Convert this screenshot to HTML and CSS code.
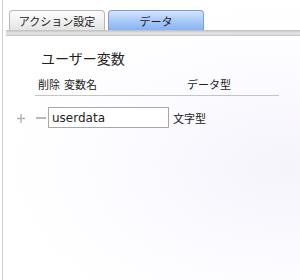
FILE: index.html
```html
<!DOCTYPE html>
<html lang="ja">
<head>
  <meta charset="UTF-8">
  <title>データ</title>
  <link rel="stylesheet" href="styles.css">
</head>
<body>
  <div class="frame">
    <div class="tabs">
      <div class="tab">アクション設定</div>
      <div class="tab active">データ</div>
    </div>
    <div class="tabbar"></div>

    <div class="panel">
      <h2 class="title">ユーザー変数</h2>
      <div class="head">
        <span class="col-del">削除</span>
        <span class="col-name">変数名</span>
        <span class="col-type">データ型</span>
      </div>
      <div class="row">
        <svg class="op" width="10" height="10" viewBox="0 0 10 10"><path d="M5 1v9M1 5.5h8" stroke="#b0b0b0" stroke-width="1.3"/></svg>
        <svg class="op minus" width="10" height="10" viewBox="0 0 10 10"><path d="M0 5h10" stroke="#a0a0a0" stroke-width="1.5"/></svg>
        <input class="name" type="text" value="userdata">
        <span class="type">文字型</span>
      </div>
    </div>
  </div>
</body>
</html>
```

FILE: styles.css
```css
body {
  margin: 0;
  font-family: "Noto Sans CJK JP", "DejaVu Sans", sans-serif;
  color: #222;
  background: #fff radial-gradient(ellipse at 95% 60%, #f6f4fb 0%, #fbfaff 35%, #fff 70%);
  height: 280px;
  overflow: hidden;
}
.frame {
  margin-left: 2px;
  height: 280px;
  border-left: 1px solid #cfcfcf;
}
.tabs {
  display: flex;
  gap: 3px;
  padding: 10px 0 0 6px;
}
.tab {
  width: 96px;
  height: 20px;
  line-height: 21px;
  text-align: center;
  font-size: 11px;
  color: #222;
  border: 1px solid #b8b8b8;
  border-bottom: none;
  border-radius: 4px 4px 0 0;
  background: linear-gradient(#fdfdfd, #e4e4e4);
  box-sizing: border-box;
}
.tab.active {
  border-color: #7a9ee0;
  background: linear-gradient(#d2e3fc, #86b3f5);
}
.tabbar {
  margin-left: 3px;
  height: 6px;
  background: linear-gradient(#bdbdbd, #e6e6e6 55%, #c8c8c8);
}
.panel {
  padding: 12px 0 0 32px;
  width: 244px;
}
.title {
  margin: 0 0 0 6px;
  font-size: 14px;
  font-weight: normal;
  line-height: 20px;
}
.head {
  display: flex;
  white-space: nowrap;
  font-size: 11px;
  line-height: 16px;
  margin-top: 8px;
  padding: 0 0 3px 3px;
  border-bottom: 1px solid #c4c4c4;
}
.col-del {
  flex: none;
  width: 26px;
}
.col-name {
  flex: none;
  width: 123px;
}
.row {
  display: flex;
  align-items: center;
  margin: 11px 0 0 -19px;
}
.op {
  flex: none;
  margin-right: 10px;
}
.op.minus {
  margin-right: 2px;
}
.name {
  width: 121px;
  height: 21px;
  box-sizing: border-box;
  border: 1px solid #a8a8a8;
  padding: 0 3px;
  font-family: "DejaVu Sans", sans-serif;
  font-size: 12px;
  color: #222;
  outline: none;
}
.type {
  margin-left: 4px;
  font-size: 11px;
}
```
